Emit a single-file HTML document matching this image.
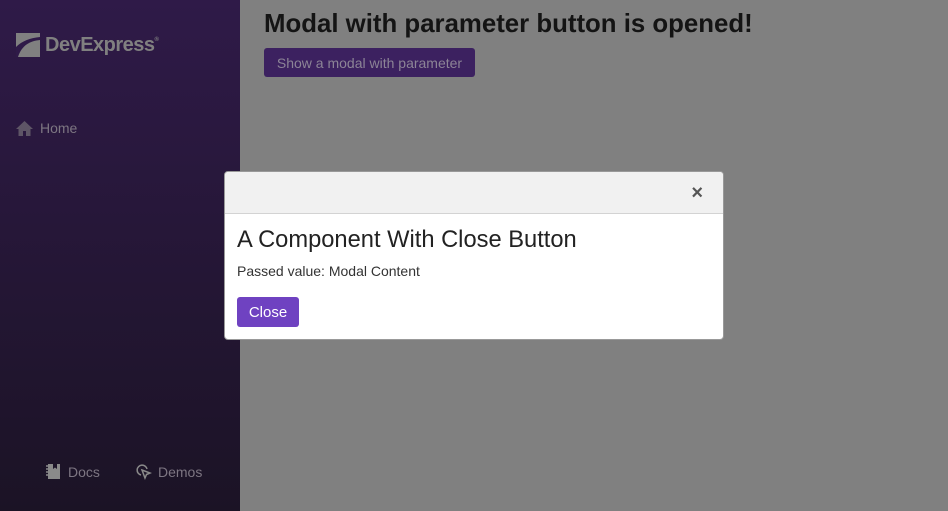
<!DOCTYPE html>
<html><head><style>
*{margin:0;padding:0;box-sizing:border-box}
body{width:948px;height:511px;overflow:hidden;font-family:"Liberation Sans",sans-serif;background:#808080;position:relative}
.side{position:absolute;left:0;top:0;width:240px;height:511px;background:linear-gradient(#2f1a48,#1b1325)}
.logo{position:absolute;left:16px;top:33px;display:flex;align-items:center;color:#808080;font-size:20px;font-weight:bold;letter-spacing:-0.5px}
.home{position:absolute;left:16px;top:120px;color:#7d7682;font-size:14px;display:flex;align-items:center;gap:7px}
.foot{position:absolute;top:463px;color:#7d7682;font-size:14px;display:flex;align-items:center;gap:6px}
h1{position:absolute;left:264px;top:10px;font-size:25.8px;font-weight:bold;color:#141414;font-family:"Liberation Sans",sans-serif;letter-spacing:0}
.btn1{position:absolute;left:264px;top:48px;width:211px;height:29px;background:#3c2160;color:#8c8496;font-size:14px;border-radius:3px;display:flex;align-items:center;justify-content:center}
.modal{position:absolute;left:224px;top:171px;width:500px;height:169px;background:#fff;border:1px solid #999;border-radius:4px;overflow:hidden}
.mh{height:42px;background:#f1f1f1;border-bottom:1px solid #d3d3d3;position:relative}
.x{position:absolute;right:20px;top:10px;font-size:20px;color:#555;font-weight:bold}
.mt{position:absolute;left:12px;top:55px;font-size:23.7px;color:#222}
.mp{position:absolute;left:12px;top:91px;font-size:14px;color:#333}
.cb{position:absolute;left:12px;top:125px;width:62px;height:30px;background:#6f42c1;color:#fff;border-radius:3px;font-size:15px;display:flex;align-items:center;justify-content:center}
</style></head><body>
<div class="side">
<div class="logo"><svg width="24" height="24" viewBox="0 0 24 24"><path d="M0 0H24V24H0Z" fill="#808080"/><path d="M0 14C6 8 14 5 24 4V7C14 8 6 12 2 24H0Z" fill="#2f1a48"/></svg><span style="margin-left:5px">DevExpress</span><sup style="font-size:6px;margin-top:-10px">®</sup></div>
<div class="home"><svg width="17" height="15" viewBox="0 0 17 15"><path d="M8.5 0L0 8H2.5V15H7V10H10V15H14.5V8H17Z" fill="#5e5566"/></svg>Home</div>
<div class="foot" style="left:45px"><svg width="17" height="17" viewBox="0 0 17 17"><path d="M3 1H8V6L10 4.5L12 6V1H15V16H3Z" fill="#8a8a8a"/><path d="M1 3h3M1 6h3M1 9h3M1 12h3" stroke="#8a8a8a" stroke-width="1.5"/></svg>Docs</div>
<div class="foot" style="left:135px"><svg width="17" height="17" viewBox="0 0 17 17" fill="none" stroke="#8a8a8a" stroke-width="1.5"><path d="M6 12A5 5 0 1 1 12 6"/><path d="M7 7L15 10L11.5 11.5L10 15Z"/></svg>Demos</div>
</div>
<h1>Modal with parameter button is opened!</h1>
<div class="btn1">Show a modal with parameter</div>
<div class="modal">
<div class="mh"><span class="x">×</span></div>
<div class="mt">A Component With Close Button</div>
<div class="mp">Passed value: Modal Content</div>
<div class="cb">Close</div>
</div>
</body></html>
